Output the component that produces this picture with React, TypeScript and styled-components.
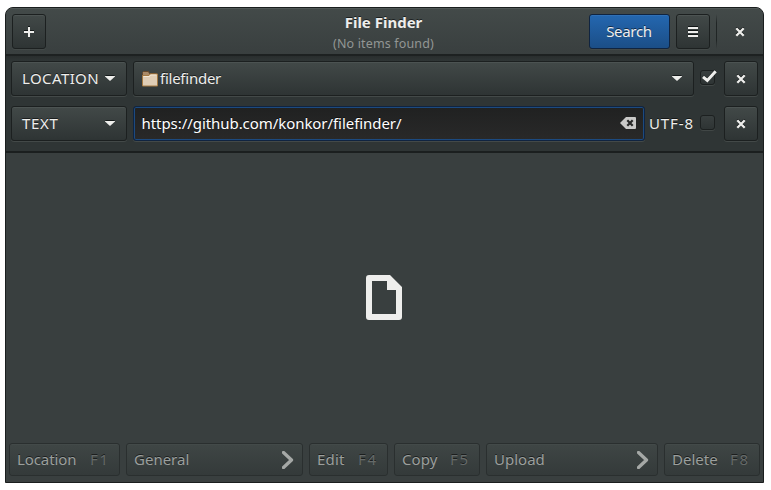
import React from "react";
import styled, { createGlobalStyle, css } from "styled-components";

const Global = createGlobalStyle`
  * { box-sizing: border-box; }
  body { margin: 0; background: #fff; overflow: hidden; }
  button { font: inherit; color: inherit; padding: 0; margin: 0; }
`;

const Desktop = styled.main`
  width: 771px;
  height: 490px;
  padding: 7px 7px 7px 5px;
  font: 15px/20px "Noto Sans", "Open Sans", sans-serif;
  color: #eeeeec;
`;

const Window = styled.section`
  width: 759px;
  height: 476px;
  display: flex;
  flex-direction: column;
  border: 1px solid #1a1e1e;
  border-radius: 8px 8px 0 0;
  background: #393f3f;
  overflow: hidden;
`;

const Header = styled.header`
  flex: 0 0 48px;
  display: flex;
  justify-content: space-between;
  align-items: flex-start;
  padding: 6px 6px 0;
  border-bottom: 2px solid #1d2121;
  background: linear-gradient(#434a49, #393f3f);
  box-shadow: inset 0 1px #515857;
`;

const HeaderSide = styled.div<{ $end?: boolean }>`
  flex: 1;
  display: flex;
  gap: 6px;
  justify-content: ${(p) => (p.$end ? "flex-end" : "flex-start")};
`;

const Titles = styled.div`
  display: flex;
  flex-direction: column;
  align-items: center;
  margin-right: 2px;
`;

const Text = styled.span<{ $spacing?: number }>`
  white-space: nowrap;
  letter-spacing: ${(p) => p.$spacing ?? 0}px;
  text-shadow: 0 -1px rgba(0, 0, 0, 0.55);
`;

const Title = styled(Text)`
  font-weight: 700;
  line-height: 20px;
  margin-top: -2px;
`;

const Subtitle = styled(Text)`
  font-size: 12.5px;
  line-height: 20px;
  margin-top: 2px;
  color: #929694;
  text-shadow: none;
`;

const Button = styled.button<{ $width: number; $tone?: "blue" | "flat" | "dim" }>`
  flex: 0 0 ${(p) => p.$width}px;
  height: 35px;
  display: flex;
  align-items: center;
  justify-content: center;
  border: 1px solid #1c2020;
  border-radius: 3px;
  background: linear-gradient(#424948, #2e3434);
  box-shadow: inset 0 1px #4c5352, 0 1px #434948;
  ${Text} { margin-top: -2px; }
  ${(p) =>
    p.$tone === "blue" &&
    css`
      padding-right: 1px;
      border-color: #102440;
      background: linear-gradient(#2467b0, #1b4e87);
      box-shadow: inset 0 1px #2f70b6, 0 1px #434948;
    `}
  ${(p) =>
    p.$tone === "flat" &&
    css`
      border-color: transparent;
      background: none;
      box-shadow: none;
    `}
  ${(p) =>
    p.$tone === "dim" &&
    css`
      height: 33px;
      padding: 0 8px 0 7px;
      justify-content: space-between;
      border-color: #2a2f2f;
      background: linear-gradient(#3f4645, #343a3a);
      box-shadow: inset 0 1px #434a49;
      color: #9b9f9d;
    `}
`;

const Separator = styled.i`
  width: 1px;
  height: 35px;
  background: linear-gradient(transparent, #202525 25%, #202525 75%, transparent);
`;

const Queries = styled.div`
  flex: 0 0 97px;
  display: flex;
  flex-direction: column;
  gap: 10px;
  padding: 5px 5px 0;
  border-bottom: 2px solid #1b1f1f;
  background: linear-gradient(#292e2e, #2f3535 5px);
`;

const Row = styled.div`
  display: flex;
  align-items: center;
  height: 35px;
`;

const Combo = styled(Button)`
  justify-content: flex-start;
  padding: 0 11px 0 10px;
  margin-right: 6px;
  > svg:last-child { margin-left: auto; }
`;

const FolderCombo = styled(Combo)`
  padding-left: 7px;
  > svg:first-child { margin-right: 1px; }
`;

const Entry = styled.div`
  flex: 0 0 512px;
  height: 35px;
  display: flex;
  align-items: center;
  justify-content: space-between;
  padding: 0 8px 0 7.5px;
  border: 1px solid #102440;
  border-radius: 3px;
  background: linear-gradient(#202121, #292929);
  box-shadow: inset 0 0 0 1px #1c4a80, 0 1px #434948;
  color: #fff;
  ${Text} { margin-top: -2px; }
`;

const Utf = styled(Text)`
  flex: 0 0 55px;
  padding-left: 4px;
  margin-top: -2px;
`;

const CheckBox = styled.span`
  flex: 0 0 15px;
  min-width: 0;
  height: 15px;
  margin: 0 9px 2px 0;
  border: 1px solid #1c2020;
  border-radius: 3px;
  background: linear-gradient(#393f3f, #2e3434);
  box-shadow: 0 1px #414746;
  svg { display: block; margin-top: -1px; overflow: visible; }
`;

const Results = styled.div`
  flex: 1;
  display: flex;
  justify-content: center;
  align-items: flex-start;
  padding: 122px 2px 0 0;
`;

const Footer = styled.footer`
  flex: 0 0 39px;
  display: flex;
  gap: 6px;
  padding-left: 3px;
`;

const Shortcut = styled(Text)`
  color: #656a69;
  margin-right: 1px;
`;

const Close = () => (
  <svg width="10" height="10" viewBox="0 0 10 10">
    <path d="M1.3.3 8.7 7.7M8.7.3 1.3 7.7" stroke="#111616" strokeWidth="2.2" />
    <path d="M1.3 1.3 8.7 8.7M8.7 1.3 1.3 8.7" stroke="#eeeeec" strokeWidth="2.3" />
  </svg>
);

const Caret = () => (
  <svg width="10" height="7" viewBox="0 0 10 7">
    <path d="M0 0h10L5 5z" fill="#151a1a" />
    <path d="M0 1h10v.6L5 6 0 1.6z" fill="#eeeeec" />
  </svg>
);

const Chevron = () => (
  <svg width="12" height="18" viewBox="0 0 12 18">
    <path d="m1.5 1.5 8 7.5-8 7.5" fill="none" stroke="#a5a8a6" strokeWidth="3.3" strokeLinejoin="round" strokeLinecap="round" />
  </svg>
);

const Folder = () => (
  <svg width="18" height="18" viewBox="0 0 18 18">
    <path d="M1.5 15V2.5L2.5 1.5h5l1 2h7V14z" fill="#a98a68" stroke="#67492b" />
    <path d="M1.5 5.5H8l1-1.5h7.5v12h-15z" fill="#dfcdb5" stroke="#a57a42" />
    <path d="M2.5 6.5h6l1-1.5h6" fill="none" stroke="#f3e8d8" />
  </svg>
);

const Clear = () => (
  <svg width="16" height="13" viewBox="0 0 16 13">
    <path d="M6 0h9q1 0 1 1v10q0 1-1 1H6L0 6z" fill="#c9c9c8" />
    <path d="m7.3 3.3 5.4 5.4m0-5.4L7.3 8.7" stroke="#262727" strokeWidth="2.2" />
  </svg>
);

const Check = () => (
  <svg width="16" height="13" viewBox="0 0 16 13">
    <path d="m2 6.3 4.3 3.6L14.7.4" fill="none" stroke="#151a1a" strokeWidth="3" />
    <path d="m2 6.8 4.3 3.7L14.7 1.2" fill="none" stroke="#eeeeec" strokeWidth="3" />
  </svg>
);

const actions = [
  { label: "Location", width: 111, spacing: -0.1, shortcut: "F1" },
  { label: "General", width: 177, spacing: 0 },
  { label: "Edit", width: 79, spacing: 0.2, shortcut: "F4" },
  { label: "Copy", width: 86, spacing: 0.1, shortcut: "F5" },
  { label: "Upload", width: 172, spacing: 0 },
  { label: "Delete", width: 96, spacing: 0, shortcut: "F8" },
];

export default function App() {
  return (
    <Desktop>
      <Global />
      <Window>
        <Header>
          <HeaderSide>
            <Button $width={34} aria-label="Add">
              <svg width="10" height="12" viewBox="0 0 10 12">
                <path d="M0 4h10v2H0zM4 0h2v10H4z" fill="#111616" />
                <path d="M0 5h10v2H0zM4 1h2v10H4z" fill="#eeeeec" />
              </svg>
            </Button>
          </HeaderSide>
          <Titles>
            <Title>File Finder</Title>
            <Subtitle $spacing={0.15}>(No items found)</Subtitle>
          </Titles>
          <HeaderSide $end>
            <Button $width={81} $tone="blue"><Text $spacing={-0.3}>Search</Text></Button>
            <Button $width={34} aria-label="Menu">
              <svg width="10" height="12" viewBox="0 0 10 12">
                <path d="M0 0h10v2H0zm0 4h10v2H0zm0 4h10v2H0z" fill="#111616" />
                <path d="M0 1h10v2H0zm0 4h10v2H0zm0 4h10v2H0z" fill="#eeeeec" />
              </svg>
            </Button>
            <Separator />
            <Button $width={34} $tone="flat" aria-label="Close"><Close /></Button>
          </HeaderSide>
        </Header>
        <Queries>
          <Row>
            <Combo $width={116}><Text $spacing={0.4}>LOCATION</Text><Caret /></Combo>
            <FolderCombo $width={561}><Folder /><Text $spacing={-0.25}>filefinder</Text><Caret /></FolderCombo>
            <CheckBox><Check /></CheckBox>
            <Button $width={34} aria-label="Remove location"><Close /></Button>
          </Row>
          <Row>
            <Combo $width={116}><Text $spacing={0.7}>TEXT</Text><Caret /></Combo>
            <Entry><Text $spacing={-0.06}>https://github.com/konkor/filefinder/</Text><Clear /></Entry>
            <Utf $spacing={0.9}>UTF-8</Utf>
            <CheckBox />
            <Button $width={34} aria-label="Remove text"><Close /></Button>
          </Row>
        </Queries>
        <Results>
          <svg width="36" height="45" viewBox="0 0 36 45">
            <path fillRule="evenodd" d="M3 0h21l12 12v30q0 3-3 3H3q-3 0-3-3V3q0-3 3-3zm3 6v33h24V15h-9V6z" fill="#eeeeec" />
          </svg>
        </Results>
        <Footer>
          {actions.map((a) => (
            <Button key={a.label} $width={a.width} $tone="dim">
              <Text $spacing={a.spacing}>{a.label}</Text>
              {a.shortcut ? <Shortcut $spacing={1.8}>{a.shortcut}</Shortcut> : <Chevron />}
            </Button>
          ))}
        </Footer>
      </Window>
    </Desktop>
  );
}
